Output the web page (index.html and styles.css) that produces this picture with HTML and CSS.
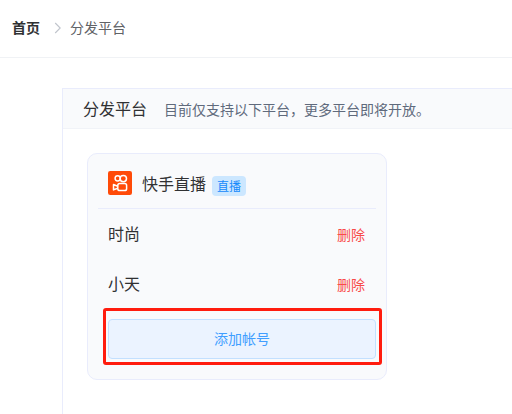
FILE: index.html
```html
<!DOCTYPE html>
<html lang="zh-CN">
<head>
    <meta charset="UTF-8">
    <meta name="viewport" content="width=device-width, initial-scale=1.0">
    <title>分发平台</title>
    <link rel="stylesheet" href="styles.css">
</head>
<body>
    <nav class="breadcrumb">
        <a class="home">首页</a>
        <svg class="arrow" width="8" height="12" viewBox="0 0 8 12">
            <path d="M1.2 1 L6.2 6 L1.2 11" fill="none" stroke="#c0c4cc" stroke-width="1.1"/>
        </svg>
        <span class="current">分发平台</span>
    </nav>

    <main class="panel">
        <header class="panel-header">
            <h1>分发平台</h1>
            <p>目前仅支持以下平台，更多平台即将开放。</p>
        </header>

        <section class="card">
            <div class="card-header">
                <svg class="logo" width="24" height="24" viewBox="0 0 24 24">
                    <rect width="24" height="24" rx="2.2" fill="#ff4a08"/>
                    <g fill="none" stroke="#fff" stroke-width="1.5" stroke-linejoin="round">
                        <circle cx="9.7" cy="7.3" r="2.6"/>
                        <circle cx="15.3" cy="7.6" r="3.2"/>
                        <rect x="9.8" y="12.6" width="8.8" height="7" rx="1.9"/>
                        <path d="M9.6 15.2 L5.5 13.5 V18.9 L9.6 17.2"/>
                    </g>
                </svg>
                <span class="name">快手直播</span>
                <span class="tag">直播</span>
            </div>
            <div class="account">
                <span>时尚</span>
                <a class="delete">删除</a>
            </div>
            <div class="account">
                <span>小天</span>
                <a class="delete">删除</a>
            </div>
            <div class="add-wrap">
                <button class="add">添加帐号</button>
            </div>
        </section>
    </main>
</body>
</html>
```
FILE: styles.css
```css
* {
    box-sizing: border-box;
}
body {
    margin: 0;
    height: 414px;
    overflow: hidden;
    background-color: #fff;
    color: #303133;
    font-family: "Noto Sans CJK SC", sans-serif;
    font-size: 14px;
}
.breadcrumb {
    display: flex;
    align-items: center;
    height: 58px;
    padding: 0 12px 4px;
    border-bottom: 1px solid #f0f2f5;
}
.home {
    font-weight: 700;
}
.arrow {
    margin: 2px 8px 0 14px;
}
.current {
    color: #606266;
}
.panel {
    height: 340px;
    margin: 30px 0 0 62px;
    border-top: 1px solid #e9ecfc;
    border-left: 1px solid #e9ecfc;
}
.panel-header {
    display: flex;
    align-items: center;
    height: 40px;
    padding: 0 0 2px 20px;
    background-color: #f9fafc;
    border-bottom: 1px solid #f1f3f8;
}
.panel-header h1 {
    margin: 0 17px 0 0;
    font-size: 16px;
    font-weight: 400;
}
.panel-header p {
    margin: 2px 0 0;
    color: #606a7c;
}
.card {
    width: 300px;
    height: 227px;
    margin: 24px 0 0 24px;
    padding: 0 10px;
    background-color: #f9fafc;
    border: 1px solid #e9ecfc;
    border-radius: 10px;
}
.card-header {
    display: flex;
    align-items: center;
    height: 55px;
    padding: 4px 0 0 10px;
    border-bottom: 1px solid #e9ecfc;
}
.name {
    margin: 0 6px 0 10px;
    font-size: 16px;
}
.tag {
    height: 20px;
    margin-top: 5px;
    padding: 0 5px;
    border-radius: 4px;
    background-color: #cce7ff;
    color: #1389fb;
    font-size: 12px;
    line-height: 20px;
}
.account {
    display: flex;
    align-items: center;
    justify-content: space-between;
    height: 50px;
    padding: 0 11px 2px 10px;
    font-size: 16px;
}
.delete {
    margin-top: 1px;
    color: #f94a4a;
    font-size: 14px;
}
/* highlighted action */
.add-wrap {
    width: 279px;
    height: 57px;
    margin: -1px 0 0 5px;
    padding: 8px 3px 0 2px;
    border: 3px solid #ff1c0e;
    border-radius: 3px;
}
.add {
    display: block;
    width: 268px;
    height: 40px;
    padding: 0 0 2px;
    border: 1px solid #c3e0ff;
    border-radius: 4px;
    background-color: #ebf3ff;
    color: #409eff;
    font-family: inherit;
    font-size: 14px;
}
```
